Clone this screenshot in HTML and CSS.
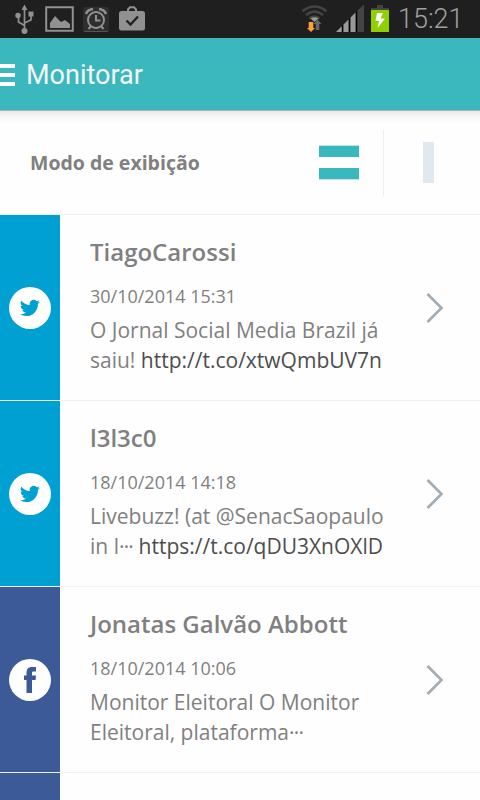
FILE: index.html
```html
<!DOCTYPE html>
<html lang="pt-BR">
<head>
<meta charset="utf-8">
<title>Monitorar</title>
<link rel="stylesheet" href="styles.css">
</head>
<body>
<svg class="defs" aria-hidden="true">
  <symbol id="twitter" viewBox="0 0 24 24"><path d="M23.9 4.6a10 10 0 0 1-2.8.8 5 5 0 0 0 2.1-2.7 10 10 0 0 1-3.1 1.2 4.9 4.9 0 0 0-8.4 4.5A14 14 0 0 1 1.6 3.2a4.9 4.9 0 0 0 1.6 6.5 4.900 4.900 0 0 1-2.300-.6v.1a4.900 4.900 0 0 0 4 4.800 5 5 0 0 1-2.200.1 4.900 4.900 0 0 0 4.600 3.400A9.900 9.900 0 0 1 0 19.500a14 14 0 0 0 7.500 2.200c9.100 0 14-7.500 14-14v-.6a10 10 0 0 0 2.400-2.500z"/></symbol>
  <symbol id="chevron" viewBox="0 0 18 32"><path d="M1.500 2 15.500 16 1.500 30" fill="none" stroke="#a2acb4" stroke-width="2.600"/></symbol>
</svg>
<div class="screen">
  <div class="status">
    <svg class="status-icons" width="160" height="38" viewBox="0 0 160 38">
      <g stroke="#919191" stroke-width="1.700" fill="none">
        <path d="M24.500 9v22M24.500 25.500l-6-3.500v-7M24.500 23l6.500-3v-6"/>
      </g>
      <g fill="#919191"><path d="M24.500 4.500l3 5.500h-6z"/><circle cx="18" cy="15.500" r="2.700"/><circle cx="24.500" cy="31" r="3"/><path d="M28.500 11.500h5v5h-5z"/></g>
      <path d="M46.200 7.200h26.600v23.600H46.200z" fill="none" stroke="#919191" stroke-width="2"/>
      <path d="M50 28v-5l5-7 6 6 4-2 5 4v4z" fill="#919191"/>
      <rect x="83" y="7" width="26" height="25" rx="2" fill="#2e2e2e"/>
      <path d="M84 31.500h24" stroke="#555" stroke-width="1"/>
      <g fill="none" stroke="#919191"><circle cx="96" cy="20" r="8" stroke-width="2"/><path d="M96 15v5.500h4.500" stroke-width="2"/><path d="M86 14c1-3 3-4.500 7-5M106 14c-1-3-3-4.500-7-5" stroke-width="2.500"/><path d="M91 26l-2.500 3M101 26l2.500 3" stroke-width="2"/></g>
      <rect x="119" y="11" width="26" height="19.500" rx="2.500" fill="#919191"/>
      <path d="M128 12V9.500l2-2.200h4l2 2.200V12" fill="none" stroke="#919191" stroke-width="2"/>
      <path d="M126.500 20.500l4 4 7.500-8" fill="none" stroke="#202020" stroke-width="2.300"/>
    </svg>
    <svg class="status-icons" width="105" height="38" viewBox="295 0 105 38">
      <g fill="none" stroke="#444" stroke-width="2.600"><path d="M302.500 11.200q12-9.400 24 0M306 15.100q8.500-7 17 0M309.500 18.500q5-4 10 0"/></g>
      <path d="M314.500 22l-4-3.500q4-2.500 8 0z" fill="#999"/>
      <path d="M308.700 22h4.600v6h1.700l-4 4-4-4h1.700z" fill="#ffa033"/>
      <path d="M315.700 30h3.600v-6h2l-3.800-4.500-3.800 4.500h2z" fill="#686868"/>
      <path d="M336 32l5.700-5.700V32zM343.500 32v-7.500l5-5V32zM350.500 32V17.500l5-5V32z" fill="#999"/>
      <path d="M357.500 32V10.500l6.500-6V32z" fill="#444"/>
      <path d="M356.500 11.500V32M349.500 18.500V32M342.500 25.500V32" stroke="#000"/>
      <path d="M371 10V8h6V5h6v3h6v2z" fill="#444"/>
      <path d="M371 10h18v22h-18z" fill="#90d000"/>
      <path d="M377 13h6l-2.500 5.500h4.500L377.500 28l1.500-7h-3.500z" fill="#fff"/>
    </svg>
    <span class="clock">15:21</span>
  </div>
  <header class="appbar">
    <div class="menu"><i></i><i></i><i></i></div>
    <h1>Monitorar</h1>
  </header>
  <section class="mode">
    <span class="mode-label">Modo de exibição</span>
    <div class="mode-rows"><i></i><i></i></div>
    <div class="mode-column"><i></i></div>
  </section>
  <main>
    <article class="post twitter">
      <div class="network"><span><svg width="20" height="20"><use href="#twitter"/></svg></span></div>
      <div class="content">
        <h2>TiagoCarossi</h2>
        <time>30/10/2014 15:31</time>
        <p>O Jornal Social Media Brazil já<br>saiu! <a>http://t.co/xtwQmbUV7n</a></p>
      </div>
      <svg class="chevron"><use href="#chevron"/></svg>
    </article>
    <article class="post twitter">
      <div class="network"><span><svg width="20" height="20"><use href="#twitter"/></svg></span></div>
      <div class="content">
        <h2>l3l3c0</h2>
        <time>18/10/2014 14:18</time>
        <p>Livebuzz! (at @SenacSaopaulo<br>in l<b>···</b> <a>https://t.co/qDU3XnOXlD</a></p>
      </div>
      <svg class="chevron"><use href="#chevron"/></svg>
    </article>
    <article class="post facebook">
      <div class="network"><span><svg width="12" height="26" viewBox="0 0 12 26"><path d="M2.500 26V13H0V8.500h2.500V6C2.500 2 4.500 0 8 0h4v4.500H9.500C8.500 4.500 8 5 8 6v2.500h4l-.4 4.500H8v13z"/></svg></span></div>
      <div class="content">
        <h2>Jonatas Galvão Abbott</h2>
        <time>18/10/2014 10:06</time>
        <p>Monitor Eleitoral O Monitor<br>Eleitoral, plataforma<b>···</b></p>
      </div>
      <svg class="chevron"><use href="#chevron"/></svg>
    </article>
    <article class="post facebook"><div class="network"></div></article>
  </main>
</div>
</body>
</html>
```
FILE: styles.css
```css
* { box-sizing: border-box; }
body { margin: 0; background: #fefefe; font-family: "Open Sans", "Noto Sans", sans-serif; color: #808080; }
.defs { display: none; }
.screen { width: 480px; height: 800px; overflow: hidden; display: flex; flex-direction: column; }
.status { flex: none; height: 38px; background: #1f1f1f; display: flex; }
.status-icons { flex: none; }
.status-icons + .status-icons { margin-left: 135px; }
.clock { font: 300 27px/39px Roboto, sans-serif; color: #a0a0a0; margin-left: -2px; }
.appbar { flex: none; height: 72px; background: #3bb7be; display: flex; align-items: center; }
.menu { width: 15px; display: grid; gap: 5px; padding-top: 2px; }
.menu i { height: 4px; background: #fff; }
h1 { margin: 0 0 0 11px; font: 400 27px/36px Roboto, sans-serif; color: #f4f6f6; padding-top: 1px; }
.mode { flex: none; height: 105px; display: flex; align-items: center; padding-left: 30px; border-bottom: 1px solid #eef3f7; background: linear-gradient(#b2b2b2 0 1px, #e8e8e8 1px, #f8f8f8 7px, #fcfcfc 13px, #fefefe 14px); }
.mode-label { width: 289px; padding-top: 1px; font-size: 19.5px; font-weight: 700; line-height: 26px; }
.mode-rows { width: 40px; display: grid; gap: 11px; }
.mode-rows i { height: 12px; background: #3bb7be; }
.mode-rows i:first-child { border-top: 1px solid #b9e9eb; }
.mode-rows i:last-child { border-bottom: 1px solid #b9e9eb; }
.mode-column { margin: 2px 0 0 24px; border-left: 1px solid #eee; height: 66px; padding: 12px 0 0 39px; }
.mode-column i { display: block; width: 11px; height: 41px; background: #e1e9f0; }
.post { height: 186px; display: flex; align-items: stretch; border-bottom: 1px solid #eff2f4; }
.network { flex: none; width: 60px; display: flex; align-items: center; justify-content: center; padding-top: 1px; }
.network span { width: 42px; height: 42px; border-radius: 50%; background: #fff; display: flex; align-items: center; justify-content: center; }
.network svg { display: block; }
.twitter .network { background: #00a0d2; fill: #00a0d2; }
.facebook .network { background: #3c5a98; fill: #3c5a98; }
.content { width: 366px; padding: 22px 0 0 30px; }
h2 { margin: 0; font-size: 24px; line-height: 30px; font-weight: 600; white-space: nowrap; }
time { display: block; margin-top: 19px; font-size: 18px; line-height: 20px; }
p { margin: 9px 0 0; font-size: 21px; line-height: 30px; white-space: nowrap; }
p b { font-weight: 400; letter-spacing: -0.8px; }
a { color: #4d4d4d; }
.chevron { flex: none; width: 18px; height: 32px; align-self: center; }
```
